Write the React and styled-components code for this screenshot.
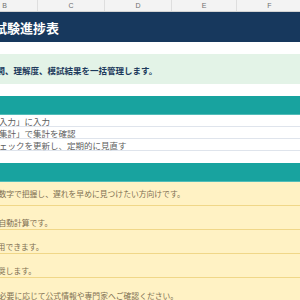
import styled, { createGlobalStyle } from "styled-components";

const GlobalStyle = createGlobalStyle`
  html, body {
    margin: 0;
    padding: 0;
    background: #ffffff;
    overflow: hidden;
  }
  body {
    font-family: "Noto Sans CJK JP", "Noto Sans", sans-serif;
  }
`;

const Sheet = styled.div`
  width: 300px;
  height: 300px;
  overflow: hidden;
  display: flex;
  flex-direction: column;
`;

const ColumnBar = styled.div`
  flex-shrink: 0;
  display: grid;
  grid-template-columns: 66px 67px 67px 65px 66px 66px;
  margin-left: -28px;
  height: 12px;
  box-sizing: border-box;
  background: #f3f3f3;
  border-bottom: 1px solid #d3d3d3;
`;

const ColLabel = styled.div`
  display: flex;
  align-items: center;
  justify-content: center;
  font-family: "Liberation Sans", Arial, sans-serif;
  font-size: 7px;
  color: #6f6f6f;
  border-right: 1px solid #dedede;
`;

const Band = styled.div`
  flex-shrink: 0;
  height: ${(p) => p.$h}px;
  box-sizing: border-box;
  background: ${(p) => p.$bg || "#ffffff"};
  border-bottom: ${(p) => (p.$line ? `1px solid ${p.$line}` : "none")};
  display: flex;
  align-items: ${(p) => p.$align || "center"};
  padding-top: ${(p) => p.$pt || 0}px;
  padding-bottom: ${(p) => p.$pb || 0}px;
  white-space: nowrap;
`;

const Cell = styled.span`
  margin-left: ${(p) => p.$indent}px;
  font-size: ${(p) => p.$size}px;
  font-weight: ${(p) => p.$weight || 400};
  color: ${(p) => p.$color};
  line-height: 1.2;
`;

const cols = ["B", "C", "D", "E", "F", "G"];

const steps = [
  "シート「入力」に入力",
  "シート「集計」で集計を確認",
  "理解度チェックを更新し、定期的に見直す",
];

// indents put the hidden head of each note left of the visible area
const notes = [
  { text: "進捗を数字で把握し、遅れを早めに見つけたい方向けです。", indent: -25, align: "center", pb: 0 },
  { text: "集計は自動計算です。", indent: -25, align: "flex-end", pb: 2 },
  { text: "再利用できます。", indent: -18, align: "flex-end", pb: 2 },
  { text: "推奨します。", indent: -10, align: "flex-end", pb: 2 },
  { text: "※必要に応じて公式情報や専門家へご確認ください。", indent: -9, align: "flex-end", pb: 1 },
];

export default function App() {
  return (
    <>
      <GlobalStyle />
      <Sheet>
        <ColumnBar>
          {cols.map((c) => (
            <ColLabel key={c}>{c}</ColLabel>
          ))}
        </ColumnBar>

        <Band $h={30} $bg="#17385d" $pt={1}>
          <Cell $indent={-32} $size={13} $weight={700} $color="#ffffff">
            資格試験進捗表
          </Cell>
        </Band>
        <Band $h={12} />
        <Band $h={30} $bg="#e3f3e7" $pt={3}>
          <Cell $indent={-29} $size={8.5} $weight={700} $color="#1d3a5c">
            学習時間、理解度、模試結果を一括管理します。
          </Cell>
        </Band>
        <Band $h={12} />
        <Band $h={19} $bg="#18a39f" $line="#52bcb8" />

        {steps.map((s) => (
          <Band key={s} $h={12} $line="#dfe4ec" $pt={1}>
            <Cell $indent={-35} $size={8.5} $color="#5d5d5d">
              {s}
            </Cell>
          </Band>
        ))}
        <Band $h={12} />
        <Band $h={19} $bg="#18a39f" $line="#52bcb8" />

        {notes.map((n) => (
          <Band
            key={n.text}
            $h={24}
            $bg="#fff2c4"
            $line="#f0d788"
            $align={n.align}
            $pb={n.pb}
          >
            <Cell $indent={n.indent} $size={7.8} $color="#7e6f52">
              {n.text}
            </Cell>
          </Band>
        ))}
      </Sheet>
    </>
  );
}
